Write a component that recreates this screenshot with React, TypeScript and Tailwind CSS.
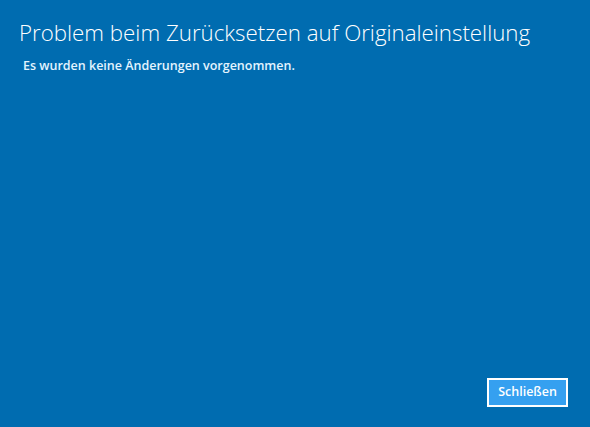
export default function App() {
  return (
    <div className="w-[590px] h-[427px] bg-[#006cb0] flex flex-col justify-between overflow-hidden" style={{ fontFamily: '"Open Sans", "Noto Sans", sans-serif' }}>
      <div className="flex flex-col pt-[17px] pl-[19px]">
        <h1 className="text-[22.3px] leading-[32px] font-light text-white">Problem beim Zurücksetzen auf Originaleinstellung</h1>
        <p className="mt-[8px] pl-[4px] text-[12.5px] leading-[18px] font-semibold text-[#e3f4ff]">Es wurden keine Änderungen vorgenommen.</p>
      </div>
      <div className="flex justify-end pr-[22px] pb-[20px]">
        <button className="w-[81px] h-[29px] border-2 border-white bg-[#35a0f0] text-white text-[12.5px] font-semibold flex items-center justify-center">Schließen</button>
      </div>
    </div>
  );
}
